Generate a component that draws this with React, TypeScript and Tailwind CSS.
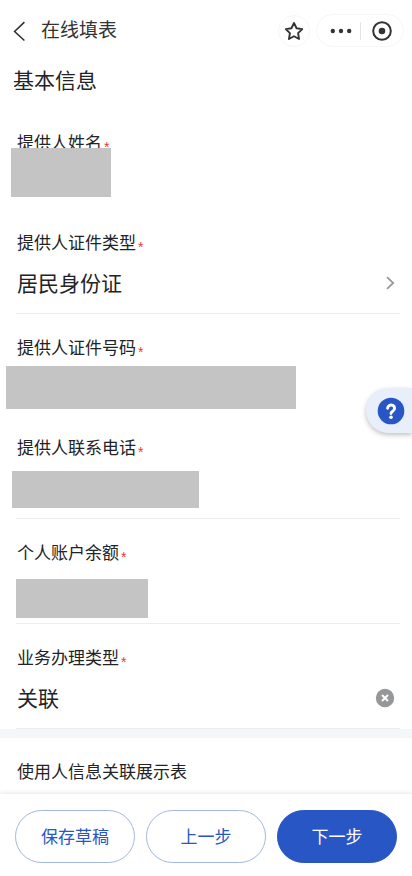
import { useState } from "react";

interface Field {
  id: string;
  label: string;
  kind: "masked" | "select" | "clearable";
  // Masked fields keep their content hidden behind a grey block
  mask?: string;
  line: boolean;
}

const FIELDS: Field[] = [
  { id: "name",    label: "提供人姓名",     kind: "masked", mask: "left-[11px] top-[39px] h-[49px] w-[100px]", line: false },
  { id: "idType",  label: "提供人证件类型", kind: "select", line: true },
  { id: "idNo",    label: "提供人证件号码", kind: "masked", mask: "left-[6px] top-[52px] h-[43px] w-[290px]", line: false },
  { id: "phone",   label: "提供人联系电话", kind: "masked", mask: "left-3 top-[57px] h-[37px] w-[187px]", line: true },
  { id: "balance", label: "个人账户余额",   kind: "masked", mask: "left-4 top-[60px] h-[39px] w-[132px]", line: true },
  { id: "bizType", label: "业务办理类型",   kind: "clearable", line: true },
];

export default function App() {
  return (
    <div className="flex min-h-screen flex-col bg-white font-['Noto_Sans_CJK_SC',sans-serif] text-[#222326]">
      <Header />

      <main className="flex-1">
        <h1 className="px-[13px] pb-3 text-[21px] leading-9">基本信息</h1>
        <form>
          {FIELDS.map(field => (
            <FormRow key={field.id} field={field} />
          ))}
        </form>

        <div className="h-[9px] bg-[#f5f6f8]" />

        <h2 className="px-[17px] pt-[21px] pb-[10px] text-[17px] leading-6">使用人信息关联展示表</h2>
      </main>

      {/* Help tab on the right edge */}
      <button type="button" aria-label="帮助"
        className="fixed top-[388px] right-0 z-20 flex h-[45px] w-[46px] items-center rounded-l-full bg-[#e8eefa] pl-[11px] shadow-[0_2px_5px_rgba(0,0,0,0.25)]">
        <svg viewBox="0 0 28 28" className="size-7" fill="none">
          <circle cx="14" cy="14" r="13.3" fill="#2856c4" />
          <path d="M10.6 11.2a3.5 3.2 0 1 1 5.4 2.7c-1.3.8-2 1.3-2 2.6" stroke="#fff" strokeWidth="2.9" strokeLinecap="round" />
          <circle cx="14" cy="20.2" r="1.8" fill="#fff" />
        </svg>
      </button>

      <footer className="sticky bottom-0 z-10 flex gap-[11px] bg-white px-[15px] pt-[16px] pb-[13px] shadow-[0_-1px_4px_rgba(0,0,0,0.1)]">
        <button type="button" className="h-[53px] flex-1 rounded-full border border-[#a3b7dc] pb-[2px] text-[17px] text-[#2856c4]">保存草稿</button>
        <button type="button" className="h-[53px] flex-1 rounded-full border border-[#a3b7dc] pb-[2px] text-[17px] text-[#2856c4]">上一步</button>
        <button type="button" className="h-[53px] flex-1 rounded-full border border-[#2856c4] bg-[#2856c4] pb-[2px] text-[17px] text-white">下一步</button>
      </footer>
    </div>
  );
}

function Header() {
  return (
    <header className="flex h-[61px] items-center pr-2 pl-3">
      <button type="button" aria-label="返回" className="mr-[13px] flex h-8 w-4 items-center">
        <svg viewBox="0 0 16 24" className="h-6 w-4" fill="none" stroke="#333" strokeWidth="1.6">
          <path d="M12.4 3.1 2.6 12.5l9.8 9" />
        </svg>
      </button>
      <span className="flex-1 pb-[2px] text-[19px] text-[#333]">在线填表</span>

      <button type="button" aria-label="收藏" className="mr-[6px] flex size-8 items-center justify-center rounded-full border border-[#f6f6f6]">
        <svg viewBox="0 0 20 20" className="size-[22px]" fill="none" stroke="#333" strokeWidth="1.7" strokeLinejoin="round">
          <path d="m10 2.7 2.3 4.8 5.2.8-3.8 3.7.9 5.3-4.6-2.5-4.6 2.5.9-5.3-3.8-3.7 5.2-.8z" />
        </svg>
      </button>

      <div className="flex h-[33px] w-[88px] items-center rounded-full border border-[#f6f6f6]">
        <button type="button" aria-label="更多" className="flex w-[43px] justify-center pl-1">
          <svg viewBox="0 0 22 6" className="h-[6px] w-[22px]" fill="#333">
            <circle cx="2.8" cy="3" r="2.2" />
            <circle cx="11" cy="3" r="2.2" />
            <circle cx="19.2" cy="3" r="2.2" />
          </svg>
        </button>
        <span className="h-[18px] w-px bg-[#e4e4e4]" />
        <button type="button" aria-label="关闭" className="flex flex-1 justify-center">
          <svg viewBox="0 0 20 20" className="size-5" fill="none">
            <circle cx="10" cy="10" r="8.8" stroke="#333" strokeWidth="2" />
            <circle cx="10" cy="10" r="3.3" fill="#333" />
          </svg>
        </button>
      </div>
    </header>
  );
}

function FormRow({ field }: { field: Field }) {
  const [value, setValue] = useState(field.kind === "clearable" ? "关联" : "");

  return (
    <div className="relative pt-[21px]">
      <label htmlFor={field.id} className="flex items-end px-[17px] text-[17px] leading-6">
        {field.label}
        <span className="ml-[2px] font-['Liberation_Sans',sans-serif] text-[14px] leading-[14px] text-[#e5383b]">*</span>
      </label>

      <div className={`mr-3 ml-4 flex items-center pt-[13px] pr-1 pl-px ${field.line ? "border-b border-[#ededf0] pb-[14px]" : "pb-[10px]"}`}>
        {field.kind === "select" ? (
          <>
            <select id={field.id} className="h-8 min-w-0 flex-1 appearance-none bg-transparent pb-[2px] text-[21px] leading-[30px] outline-none">
              <option>居民身份证</option>
            </select>
            <svg viewBox="0 0 12 16" className="h-4 w-3" fill="none" stroke="#999" strokeWidth="1.8">
              <path d="M3 2.2 9.2 8 3 13.8" />
            </svg>
          </>
        ) : (
          <input id={field.id} value={value} onChange={e => setValue(e.target.value)}
            className="h-8 min-w-0 flex-1 bg-transparent pb-[2px] text-[21px] leading-[30px] outline-none" />
        )}

        {field.kind === "clearable" && (
          <button type="button" aria-label="清除" onClick={() => setValue("")} className="mr-px">
            <svg viewBox="0 0 20 20" className="size-5" fill="none">
              <circle cx="10" cy="10" r="9.2" fill="#969799" />
              <path d="m7 7 6 6m0-6-6 6" stroke="#fff" strokeWidth="1.9" />
            </svg>
          </button>
        )}
      </div>

      {field.mask && <div className={`absolute bg-[#c4c4c4] ${field.mask}`} />}
    </div>
  );
}
